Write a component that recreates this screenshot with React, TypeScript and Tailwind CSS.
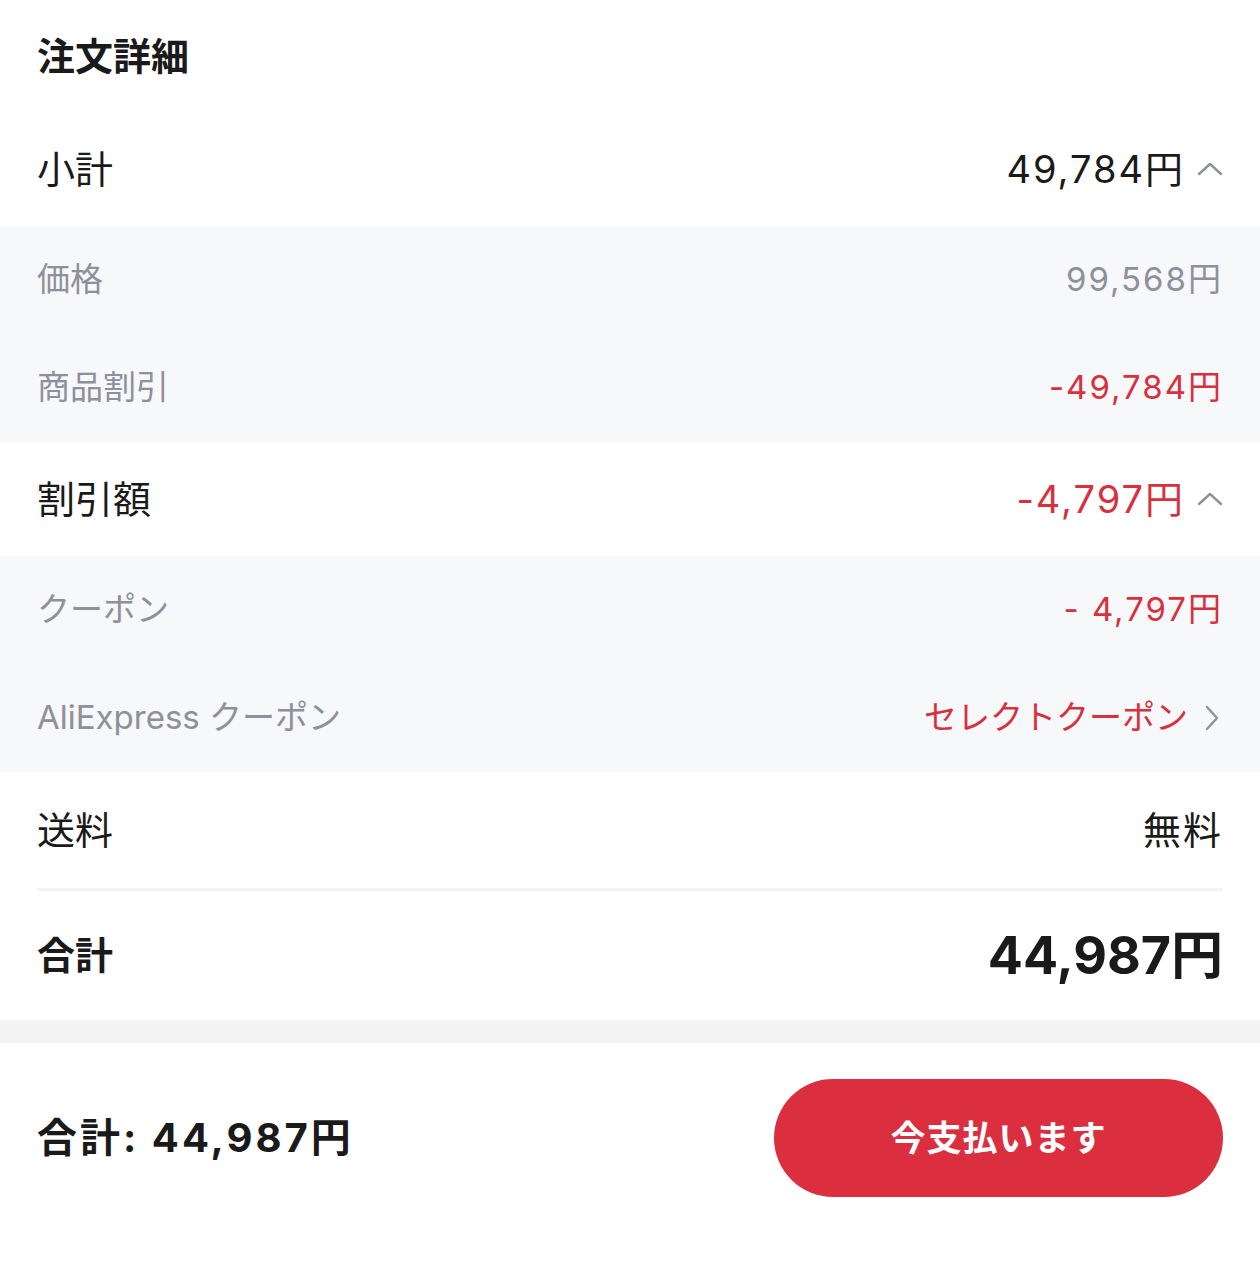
import React from "react"

const font = { fontFamily: '"Inter", "Noto Sans CJK JP", sans-serif' }

function ChevronUp() {
  return (
    <svg width="26" height="16" viewBox="0 0 26 16" fill="none" className="ml-[12px]">
      <path d="M2 13 L13 3 L24 13" stroke="#8e919c" strokeWidth="2.4" strokeLinecap="round" strokeLinejoin="round" />
    </svg>
  )
}

function ChevronRight() {
  return (
    <svg width="16" height="26" viewBox="0 0 16 26" fill="none" className="ml-[16px] mr-[3px]">
      <path d="M3 2 L13 13 L3 24" stroke="#8e919c" strokeWidth="2.4" strokeLinecap="round" strokeLinejoin="round" />
    </svg>
  )
}

// Main summary row (white)
function MainRow({ label, value, red, chevron, h }: { label: string; value: string; red?: boolean; chevron?: boolean; h: string }) {
  return (
    <div className={`flex items-center justify-between px-[37px] bg-white ${h}`}>
      <span className="text-[38px] text-[#1a1a1a]">{label}</span>
      <div className="flex items-center">
        <span className={`text-[38px] tracking-[2px] ${red ? "text-[#d7303f]" : "text-[#1a1a1a]"}`}>{value}</span>
        {chevron && <ChevronUp />}
      </div>
    </div>
  )
}

// Detail row (grey background)
function SubRow({ label, value, red, link }: { label: string; value: string; red?: boolean; link?: boolean }) {
  return (
    <div className="flex items-center justify-between px-[37px] h-[108px]">
      <span className="text-[33px] text-[#8e909b]">{label}</span>
      <div className="flex items-center">
        <span className={`text-[33px] ${link ? "" : "tracking-[2px]"} ${red ? "text-[#d7303f]" : "text-[#8e909b]"}`}>{value}</span>
        {link && <ChevronRight />}
      </div>
    </div>
  )
}

export default function App() {
  return (
    <div className="w-[1260px] h-[1263px] bg-white flex flex-col" style={font}>
      <div className="h-[112px] flex items-center px-[37px]">
        <h1 className="text-[38px] font-bold text-[#1a1a1a]">注文詳細</h1>
      </div>

      <MainRow label="小計" value="49,784円" chevron h="h-[114px]" />
      <div className="bg-[#f7f8fa]">
        <SubRow label="価格" value="99,568円" />
        <SubRow label="商品割引" value="-49,784円" red />
      </div>

      <MainRow label="割引額" value="-4,797円" red chevron h="h-[114px]" />
      <div className="bg-[#f7f8fa]">
        <SubRow label="クーポン" value="- 4,797円" red />
        <SubRow label="AliExpress クーポン" value="セレクトクーポン" red link />
      </div>

      <MainRow label="送料" value="無料" h="h-[116px]" />
      <div className="px-[37px]">
        <div className="h-[3px] bg-[#f3f3f4]" />
      </div>
      <div className="h-[129px] flex items-center justify-between px-[37px]">
        <span className="text-[38px] font-bold text-[#1a1a1a]">合計</span>
        <span className="text-[52px] font-bold text-[#1a1a1a]">44,987円</span>
      </div>

      <div className="h-[23px] bg-[#f4f4f5]" />

      <div className="flex-1 bg-white pt-[36px] px-[37px]">
        <div className="flex items-center justify-between h-[118px]">
          <span className="text-[40px] font-bold text-[#1a1a1a] tracking-[3px]">合計: 44,987円</span>
          <button className="w-[449px] h-[118px] rounded-full bg-[#db2f3f] text-white text-[35px] font-bold tracking-[1px]">
            今支払います
          </button>
        </div>
      </div>
    </div>
  )
}
